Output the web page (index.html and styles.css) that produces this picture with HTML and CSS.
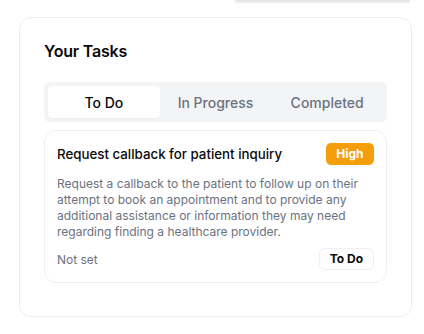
FILE: index.html
```html
<!DOCTYPE html>
<html>
<head>
<meta charset="utf-8">
<link rel="stylesheet" href="styles.css">
</head>
<body>
<div class="page">
  <div class="top-row"><div class="top-edge"></div></div>
  <section class="panel">
    <h2 class="panel-title">Your Tasks</h2>
    <div class="tabs">
      <button class="tab active">To Do</button>
      <button class="tab">In Progress</button>
      <button class="tab">Completed</button>
    </div>
    <article class="task">
      <div class="task-head">
        <h3 class="task-title">Request callback for patient inquiry</h3>
        <span class="badge-high">High</span>
      </div>
      <p class="task-desc">Request a callback to the patient to follow up on their attempt to book an appointment and to provide any additional assistance or information they may need regarding finding a healthcare provider.</p>
      <div class="task-foot">
        <span class="due">Not set</span>
        <span class="badge-status">To Do</span>
      </div>
    </article>
  </section>
</div>
</body>
</html>
```

FILE: styles.css
```css
* { box-sizing: border-box; }
html, body { margin: 0; padding: 0; background: #ffffff; }
body { font-family: Inter, "Noto Sans", sans-serif; color: #0a0a0a; }
.page { width: 424px; height: 334px; padding: 0 12px 0 19px; }
.top-row { display: flex; justify-content: flex-end; height: 2px; padding-right: 2px; }
.top-edge { width: 175px; height: 2px; background: #e5e7eb; border-radius: 0 0 4px 4px; box-shadow: 0 1px 2px rgba(0,0,0,0.08); }
.panel { margin-top: 15px; width: 393px; height: 300px; border: 1px solid #eeeeee; border-radius: 12px; padding: 21px 24px 24px; }
.panel-title { margin: 0; font-size: 16px; font-weight: 600; line-height: 24px; letter-spacing: -0.2px; }
.tabs { margin-top: 19px; display: grid; grid-template-columns: repeat(3, 1fr); height: 40px; padding: 4px; background: #f3f4f6; border-radius: 6px; }
.tab { border: 0; background: transparent; font: inherit; font-size: 14px; font-weight: 500; color: #6b7280; border-radius: 4px; padding: 0; }
.tab.active { background: #ffffff; color: #0a0a0a; box-shadow: 0 1px 2px rgba(0,0,0,0.04); }
.task { margin-top: 8px; border: 1px solid #f0f0f0; border-radius: 12px; padding: 12px; }
.task-head { display: flex; justify-content: space-between; align-items: center; height: 22px; }
.task-title { margin: 0; font-size: 13.3px; font-weight: 500; line-height: 20px; }
.badge-high { background: #f59e0b; color: #ffffff; font-size: 12px; font-weight: 700; line-height: 22px; padding: 0 10.5px; border-radius: 5px; }
.task-desc { margin: 11px 0 0; font-size: 12px; line-height: 16px; color: #6b7280; }
.task-foot { margin-top: 8px; display: flex; justify-content: space-between; align-items: center; }
.due { font-size: 12px; color: #6b7280; }
.badge-status { border: 1px solid #f0f0f0; border-radius: 6px; height: 22px; padding: 0 10px; font-size: 12px; font-weight: 700; line-height: 20px; }
```
